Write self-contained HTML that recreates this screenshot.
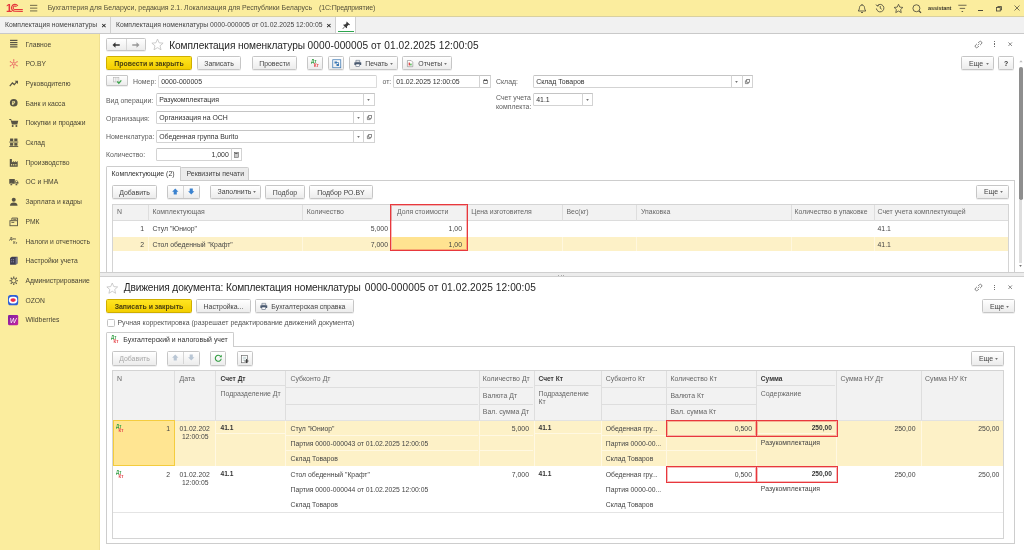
<!DOCTYPE html>
<html lang="ru"><head><meta charset="utf-8"><title>Комплектация номенклатуры</title>
<style>
html,body{margin:0;padding:0;background:#fff;}
body{width:1024px;height:550px;overflow:hidden;font-family:"Liberation Sans",sans-serif;font-size:6.93px;color:#3a3a3a;}
#root{filter:blur(0.3px);position:relative;width:1024px;height:550px;overflow:hidden;background:#fff;}
#root div{position:absolute;box-sizing:border-box;white-space:nowrap;}
.t{line-height:1.15;}
.btn{border:1px solid #c6c6c6;border-radius:1.5px;background:linear-gradient(#ffffff,#ececec);text-align:center;color:#444;box-shadow:0 0.5px 0.5px rgba(0,0,0,0.12);}
.btn.y{border-color:#cfae00;background:linear-gradient(#ffe521,#f3cf00);color:#4a4010;font-weight:bold;}
.btn.dis{color:#a8a8a8;}
.inp{border:1px solid #d3d3d3;border-top-color:#c4c4c4;border-radius:1.5px;background:#fff;padding:0 2.2px;color:#333;overflow:hidden;}
.ib{border:1px solid #d3d3d3;border-top-color:#c4c4c4;background:#fff;}
.hdr{background:#f2f2f2;}
.gl{background:#e2e2e2;}
svg{position:absolute;overflow:visible;}

</style></head><body>
<div id="root">
<div class="" style="left:0px;top:0px;width:1024px;height:16px;background:#fbed9e;"></div>
<svg style="left:0px;top:0px" width="24" height="16" viewBox="0 0 24 16"><text x="5.9" y="11.9" font-family="Liberation Sans, sans-serif" font-weight="bold" font-size="11" fill="#e5353c">1</text><g fill="none" stroke="#e5353c"><path d="M17.8 5.9 A3.45 3.45 0 1 0 14.9 11.3 H22.8" stroke-width="1.15"/><path d="M16.4 6.85 A1.75 1.75 0 1 0 14.9 9.55 H22.8" stroke-width="1.05"/></g></svg>
<svg style="left:30px;top:4px" width="8" height="8" viewBox="0 0 8 8"><g fill="#6a6446"><rect x="0" y="0.85" width="7.3" height="0.95"/><rect x="0" y="3.65" width="7.3" height="0.95"/><rect x="0" y="6.45" width="7.3" height="0.95"/></g></svg>
<div class="t" style="left:47.7px;top:4.1px;font-size:6.97px;color:#55503a;">Бухгалтерия для Беларуси, редакция 2.1. Локализация для Республики Беларусь</div>
<div class="t" style="left:319.1px;top:4.1px;font-size:7.0px;color:#55503a;letter-spacing:-0.17px;">(1С:Предприятие)</div>
<svg style="left:857px;top:2.5px" width="10" height="11" viewBox="0 0 20 22" fill="none" stroke="#4d4a3c" stroke-width="1.7"><path d="M2.5 16 C5 13.5 4.5 10 5.5 7 C6.5 3.2 13.5 3.2 14.5 7 C15.5 10 15 13.5 17.5 16 Z" stroke-linejoin="round"/><path d="M8 18.5 Q10 20.5 12 18.5"/><path d="M10 4 V2"/></svg>
<svg style="left:875px;top:3px" width="10" height="10" viewBox="0 0 20 20" fill="none" stroke="#4d4a3c" stroke-width="1.7"><path d="M4.5 5.5 A7.5 7.5 0 1 1 2.8 11"/><path d="M2 3 L4.5 6.2 L8 5" /><path d="M10.5 6 V10.5 L13.5 12.5"/></svg>
<svg style="left:892.5px;top:2.5px" width="11" height="11" viewBox="0 0 22 22" fill="none" stroke="#4d4a3c" stroke-width="1.6"><path d="M11 2.5 L13.6 8.2 L19.8 8.9 L15.2 13.1 L16.5 19.2 L11 16.1 L5.5 19.2 L6.8 13.1 L2.2 8.9 L8.4 8.2 Z"/></svg>
<svg style="left:911.5px;top:3.5px" width="10" height="10" viewBox="0 0 20 20" fill="none" stroke="#4d4a3c" stroke-width="1.7"><circle cx="8.8" cy="8.5" r="7"/><path d="M14 13.8 L18 17.6" stroke-width="2.4"/></svg>
<div class="t" style="left:928px;top:5.2px;font-size:5.6px;color:#3d3a2c;font-weight:bold;letter-spacing:-0.1px;">assistant</div>
<svg style="left:958px;top:4px" width="9" height="9" viewBox="0 0 9 9" fill="#4d4a3c"><rect x="0.3" y="0.8" width="8.2" height="0.8"/><rect x="1.7" y="3.9" width="5.4" height="0.8"/><rect x="3.6" y="7" width="1.5" height="0.9"/></svg>
<div class="" style="left:978px;top:10px;width:5px;height:1px;background:#4d4a3c;"></div>
<svg style="left:996px;top:6px" width="6" height="5.5" viewBox="0 0 12 11" fill="none" stroke="#4d4a3c" stroke-width="1.7"><rect x="1" y="3" width="7.5" height="7"/><path d="M3.5 3 V1 H11 V8 H8.5"/></svg>
<svg style="left:1013.5px;top:5px" width="6" height="6" viewBox="0 0 12 12" fill="none" stroke="#4d4a3c" stroke-width="1.5"><path d="M1 1 L11 11 M11 1 L1 11"/></svg>
<div class="" style="left:0px;top:16px;width:1024px;height:17.5px;background:#f1f1f1;border-top:1px solid #d9d0a0;border-bottom:1px solid #c9c9c9;"></div>
<div class="t" style="left:5px;top:21.1px;font-size:6.78px;color:#444;">Комплектация номенклатуры</div>
<div class="t" style="left:101.5px;top:20.8px;font-size:8px;color:#222;font-weight:bold;">×</div>
<div class="" style="left:109.5px;top:17px;width:1px;height:16px;background:#cfcfcf;"></div>
<div class="t" style="left:116px;top:21.1px;font-size:6.78px;color:#444;">Комплектация номенклатуры 0000-000005 от 01.02.2025 12:00:05</div>
<div class="t" style="left:326.5px;top:20.8px;font-size:8px;color:#222;font-weight:bold;">×</div>
<div class="" style="left:335px;top:17px;width:1px;height:16px;background:#cfcfcf;"></div>
<div class="" style="left:336px;top:17px;width:19px;height:16px;background:#fff;"></div>
<div class="" style="left:355px;top:17px;width:1px;height:16px;background:#cfcfcf;"></div>
<div class="" style="left:338px;top:31px;width:16px;height:1px;background:#2da44e;"></div>
<svg style="left:341.5px;top:20.5px" width="8.5" height="8.5" viewBox="0 0 18 18" fill="#3a3a3a" stroke="none"><path d="M10 1 L17 8 L15.5 9 L13.8 8.2 L10.5 11.5 L10.8 14.5 L9.5 15.5 L6.3 12.3 L2 17 L1 16 L5.7 11.7 L2.5 8.5 L3.5 7.2 L6.5 7.5 L9.8 4.2 L9 2.5 Z"/></svg>
<div class="" style="left:0px;top:34px;width:100px;height:516px;background:#fbed9e;border-right:1px solid #efe092;"></div>
<div class="t" style="left:25.5px;top:40.5px;font-size:6.75px;color:#4a4636;">Главное</div>
<div class="t" style="left:25.5px;top:60.2px;font-size:6.75px;color:#4a4636;">РО.BY</div>
<div class="t" style="left:25.5px;top:79.9px;font-size:6.75px;color:#4a4636;">Руководителю</div>
<div class="t" style="left:25.5px;top:99.6px;font-size:6.75px;color:#4a4636;">Банк и касса</div>
<div class="t" style="left:25.5px;top:119.3px;font-size:6.75px;color:#4a4636;">Покупки и продажи</div>
<div class="t" style="left:25.5px;top:139.0px;font-size:6.75px;color:#4a4636;">Склад</div>
<div class="t" style="left:25.5px;top:158.7px;font-size:6.75px;color:#4a4636;">Производство</div>
<div class="t" style="left:25.5px;top:178.4px;font-size:6.75px;color:#4a4636;">ОС и НМА</div>
<div class="t" style="left:25.5px;top:198.1px;font-size:6.75px;color:#4a4636;">Зарплата и кадры</div>
<div class="t" style="left:25.5px;top:217.8px;font-size:6.75px;color:#4a4636;">РМК</div>
<div class="t" style="left:25.5px;top:237.5px;font-size:6.75px;color:#4a4636;">Налоги и отчетность</div>
<div class="t" style="left:25.5px;top:257.2px;font-size:6.75px;color:#4a4636;">Настройки учета</div>
<div class="t" style="left:25.5px;top:276.9px;font-size:6.75px;color:#4a4636;">Администрирование</div>
<div class="t" style="left:25.5px;top:296.6px;font-size:6.75px;color:#4a4636;">OZON</div>
<div class="t" style="left:25.5px;top:316.3px;font-size:6.75px;color:#4a4636;">Wildberries</div>
<svg style="left:8.6px;top:39.3px" width="9.5" height="9.5" viewBox="0 0 18 18"><g fill="#575344"><rect x="2" y="1.5" width="14" height="2.3"/><rect x="2" y="5.6" width="14" height="2.3"/><rect x="2" y="9.7" width="14" height="2.3"/><rect x="2" y="13.8" width="14" height="2.3"/></g></svg>
<svg style="left:8.6px;top:59.0px" width="9.5" height="9.5" viewBox="0 0 18 18"><g stroke="#e5505c" stroke-width="1.3" fill="none"><path d="M9 1.5 V16.5 M2.5 5.2 L15.5 12.8 M2.5 12.8 L15.5 5.2"/></g><circle cx="9" cy="9" r="2.3" fill="#fbed9e" stroke="#e5505c" stroke-width="1.1"/><g fill="#e5505c"><circle cx="9" cy="1.5" r="1.1"/><circle cx="9" cy="16.5" r="1.1"/><circle cx="2.5" cy="5.2" r="1.1"/><circle cx="15.5" cy="12.8" r="1.1"/><circle cx="2.5" cy="12.8" r="1.1"/><circle cx="15.5" cy="5.2" r="1.1"/></g></svg>
<svg style="left:8.6px;top:78.7px" width="9.5" height="9.5" viewBox="0 0 18 18"><path d="M1.5 13.5 L6.5 7.5 L10 10.5 L14.5 5.5" fill="none" stroke="#575344" stroke-width="2.3"/><path d="M10.8 3.2 H17 V9.4 Z" fill="#575344"/></svg>
<svg style="left:8.6px;top:98.39999999999999px" width="9.5" height="9.5" viewBox="0 0 18 18"><circle cx="9" cy="9" r="7.3" fill="#575344"/><text x="9.2" y="12.8" font-family="Liberation Sans, sans-serif" font-weight="bold" font-size="10.5" text-anchor="middle" fill="#fbed9e">₽</text></svg>
<svg style="left:8.6px;top:118.1px" width="9.5" height="9.5" viewBox="0 0 18 18"><path d="M0.5 2 H4 L5 5 H17.5 L15.8 12.5 H5.5 L3 3.8 H0.5 Z" fill="#575344"/><circle cx="7" cy="15.3" r="1.9" fill="#575344"/><circle cx="14" cy="15.3" r="1.9" fill="#575344"/></svg>
<svg style="left:8.6px;top:137.8px" width="9.5" height="9.5" viewBox="0 0 18 18"><g fill="#575344"><rect x="2" y="1" width="6" height="5"/><rect x="10" y="1" width="6" height="5"/><rect x="0.5" y="6.8" width="17" height="1.7"/><rect x="2" y="9.6" width="6" height="5"/><rect x="10" y="9.6" width="6" height="5"/><rect x="0.5" y="15.4" width="17" height="1.7"/></g></svg>
<svg style="left:8.6px;top:157.5px" width="9.5" height="9.5" viewBox="0 0 18 18"><path d="M1.5 16.5 V2 H5.5 V8.5 L9.2 5.8 V8.5 L12.9 5.8 V8.5 L16.5 5.8 V16.5 Z" fill="#575344"/><g fill="#fbed9e"><rect x="4" y="11.5" width="2" height="2.6"/><rect x="8" y="11.5" width="2" height="2.6"/><rect x="12" y="11.5" width="2" height="2.6"/></g></svg>
<svg style="left:8.6px;top:177.20000000000002px" width="9.5" height="9.5" viewBox="0 0 18 18"><path d="M0.5 4 H11 V13 H0.5 Z M12 6.5 H15.5 L17.8 9.5 V13 H12 Z" fill="#575344"/><circle cx="4.3" cy="14" r="2.1" fill="#575344" stroke="#fbed9e" stroke-width="0.8"/><circle cx="14" cy="14" r="2.1" fill="#575344" stroke="#fbed9e" stroke-width="0.8"/><rect x="13.2" y="7.6" width="2.6" height="2.2" fill="#fbed9e"/></svg>
<svg style="left:8.6px;top:196.9px" width="9.5" height="9.5" viewBox="0 0 18 18"><circle cx="9" cy="5.2" r="3.8" fill="#575344"/><path d="M1.8 16.5 C1.8 11.5 5 10.2 9 10.2 C13 10.2 16.2 11.5 16.2 16.5 Z" fill="#575344"/></svg>
<svg style="left:8.6px;top:216.6px" width="9.5" height="9.5" viewBox="0 0 18 18"><g fill="none" stroke="#575344" stroke-width="1.7"><rect x="1.8" y="7" width="14.4" height="9.5"/><path d="M5.5 7 V2 H16.2 V7"/><path d="M4.5 10.2 H10"/></g><rect x="8" y="3.5" width="6" height="1.6" fill="#575344"/></svg>
<svg style="left:8.6px;top:236.3px" width="9.5" height="9.5" viewBox="0 0 18 18"><text x="1" y="7" font-family="Liberation Sans, sans-serif" font-weight="bold" font-style="italic" font-size="7.5" fill="#575344">Дт</text><text x="8" y="16" font-family="Liberation Sans, sans-serif" font-weight="bold" font-size="7" fill="#575344">Кт</text></svg>
<svg style="left:8.6px;top:256.0px" width="9.5" height="9.5" viewBox="0 0 18 18"><path d="M2 4 L5.5 1.5 H16 V14 L12.5 16.8 H2 Z" fill="#3e3d52"/><path d="M12.5 4 L16 1.5 V14 L12.5 16.8 Z" fill="#77768a"/><g fill="#8a89a0"><rect x="4" y="6" width="2" height="2"/><rect x="7.5" y="6" width="2" height="2"/><rect x="4" y="10" width="2" height="2"/><rect x="7.5" y="10" width="2" height="2"/></g></svg>
<svg style="left:8.6px;top:275.7px" width="9.5" height="9.5" viewBox="0 0 18 18"><g fill="none" stroke="#575344" stroke-width="1.6"><circle cx="9" cy="9" r="4.2"/><path d="M9 1 V4 M9 14 V17 M1 9 H4 M14 9 H17 M3.3 3.3 L5.5 5.5 M12.5 12.5 L14.7 14.7 M14.7 3.3 L12.5 5.5 M5.5 12.5 L3.3 14.7" stroke-width="2.2"/></g></svg>
<svg style="left:8.2px;top:295.09999999999997px" width="10.2" height="10.2" viewBox="0 0 18 18"><rect x="0" y="0" width="18" height="18" rx="4.5" fill="#2f5fd6"/><rect x="1.6" y="3.2" width="14.8" height="11.6" rx="5.5" fill="#fff"/><ellipse cx="9" cy="9" rx="4.8" ry="3.2" fill="#ee2c4a"/></svg>
<svg style="left:8.2px;top:314.8px" width="10.2" height="10.2" viewBox="0 0 18 18"><defs><linearGradient id="wb" x1="0" y1="0" x2="1" y2="1"><stop offset="0" stop-color="#7b1fa2"/><stop offset="1" stop-color="#c7249f"/></linearGradient></defs><rect x="0" y="0" width="18" height="18" rx="2" fill="url(#wb)"/><text x="9" y="13.6" font-family="Liberation Sans, sans-serif" font-style="italic" font-size="12.5" text-anchor="middle" fill="#fff">W</text></svg>
<div class="btn" style="left:106px;top:38px;width:40px;height:13px;line-height:12px;"></div>
<div class="" style="left:126px;top:39px;width:1px;height:11px;background:#d5d5d5;"></div>
<svg style="left:112px;top:41.8px" width="8" height="6" viewBox="0 0 16 12"><path d="M1 6 L7 0.5 V4.3 H15.5 V7.7 H7 V11.5 Z" fill="#333"/></svg>
<svg style="left:132px;top:41.8px" width="8" height="6" viewBox="0 0 16 12"><path d="M15 6 L9 0.5 V4.3 H0.5 V7.7 H9 V11.5 Z" fill="#999"/></svg>
<svg style="left:151px;top:38px" width="13" height="13" viewBox="0 0 22 22" fill="none" stroke="#bdbdbd" stroke-width="1.3"><path d="M11 1.8 L13.7 8.1 L20.5 8.7 L15.3 13.2 L16.9 19.9 L11 16.3 L5.1 19.9 L6.7 13.2 L1.5 8.7 L8.3 8.1 Z"/></svg>
<div class="t" style="left:169.2px;top:39.7px;font-size:10.13px;color:#262626;"><span style="letter-spacing:-0.086px">Комплектация номенклатуры </span><span style="letter-spacing:0.085px">0000-000005 от 01.02.2025 12:00:05</span></div>
<svg style="left:974px;top:39.5px" width="9" height="9" viewBox="0 0 18 18" fill="none" stroke="#7a7a7a" stroke-width="1.7"><g transform="rotate(-42 9 9)"><path d="M7.5 12 H4 A3 3 0 0 1 4 6 H7.5"/><path d="M10.5 6 H14 A3 3 0 0 1 14 12 H10.5"/><path d="M6.5 9 H11.5" stroke-width="1.4"/></g></svg>
<div class="" style="left:994px;top:41.0px;width:1.3px;height:1.3px;background:#6e6e6e;"></div>
<div class="" style="left:994px;top:43.3px;width:1.3px;height:1.3px;background:#6e6e6e;"></div>
<div class="" style="left:994px;top:45.6px;width:1.3px;height:1.3px;background:#6e6e6e;"></div>
<svg style="left:1007.9px;top:41.9px" width="4.4" height="4.4" viewBox="0 0 10 10" fill="none" stroke="#777" stroke-width="2"><path d="M1 1 L9 9 M9 1 L1 9"/></svg>
<div class="btn y" style="left:106px;top:56px;width:86px;height:14px;line-height:13px;">Провести и закрыть</div>
<div class="btn" style="left:197px;top:56px;width:44px;height:14px;line-height:13px;">Записать</div>
<div class="btn" style="left:252px;top:56px;width:45px;height:14px;line-height:13px;">Провести</div>
<div class="btn" style="left:307px;top:56px;width:16px;height:14px;line-height:13px;"></div>
<svg style="left:311px;top:58.8px" width="8.93" height="8.22" viewBox="0 0 8.93 8.22"><text x="0" y="3.67" font-family="Liberation Sans, sans-serif" font-weight="bold" font-size="4.7" fill="#35a046">Дт</text><text x="2.73" y="7.72" font-family="Liberation Sans, sans-serif" font-weight="bold" font-size="4.7" fill="#e5484d">Кт</text></svg>
<div class="btn" style="left:328px;top:56px;width:16px;height:14px;line-height:13px;"></div>
<svg style="left:331.5px;top:58.5px" width="9.5" height="9.5" viewBox="0 0 19 19" fill="none" stroke="#3c78b4" stroke-width="1.5"><rect x="1.5" y="1.5" width="16" height="16"/><rect x="5" y="5" width="5" height="4" fill="#3c78b4" stroke="none"/><rect x="9" y="10" width="5" height="4" fill="#3c78b4" stroke="none"/><path d="M10 7 H13 V10"/></svg>
<div class="btn" style="left:349px;top:56px;width:49px;height:14px;line-height:13px;"></div>
<svg style="left:353.7px;top:59.8px" width="7.6" height="6.8" viewBox="0 0 18 16"><path d="M4.5 0.8 H13.5 V5 H4.5 Z" fill="#fff" stroke="#4a5a70" stroke-width="1.3"/><rect x="0.8" y="5" width="16.4" height="7" rx="1.5" fill="#4a5a70"/><rect x="4.5" y="9.5" width="9" height="5.5" fill="#fff" stroke="#4a5a70" stroke-width="1.3"/></svg>
<div class="t" style="left:365.3px;top:59.9px;font-size:6.93px;color:#444;">Печать</div>
<svg style="left:390px;top:62.5px" width="3" height="1.9" viewBox="0 0 8 5"><path d="M0.5 0.5 H7.5 L4 4.5 Z" fill="#444"/></svg>
<div class="btn" style="left:402px;top:56px;width:50px;height:14px;line-height:13px;"></div>
<svg style="left:407px;top:59.5px" width="6.2" height="7.2" viewBox="0 0 15 17"><path d="M1 1 H10 L14 5 V16 H1 Z" fill="#fff" stroke="#777" stroke-width="1.3"/><rect x="4" y="6" width="3" height="7" fill="#d33"/><rect x="8" y="8.5" width="3" height="4.5" fill="#3a3"/></svg>
<div class="t" style="left:418.3px;top:59.9px;font-size:6.93px;color:#444;">Отчеты</div>
<svg style="left:444px;top:62.5px" width="3" height="1.9" viewBox="0 0 8 5"><path d="M0.5 0.5 H7.5 L4 4.5 Z" fill="#444"/></svg>
<div class="btn" style="left:961px;top:56px;width:33px;height:14px;line-height:13px;"></div>
<div class="t" style="left:969px;top:59.7px;font-size:6.93px;color:#444;">Еще</div>
<svg style="left:985.5px;top:62.5px" width="3" height="1.9" viewBox="0 0 8 5"><path d="M0.5 0.5 H7.5 L4 4.5 Z" fill="#444"/></svg>
<div class="btn" style="left:998px;top:56px;width:16px;height:14px;line-height:13px;font-weight:bold;color:#333;">?</div>
<div class="" style="left:1019px;top:67px;width:3.5px;height:133px;background:#8e8e8e;border-radius:1.8px;"></div>
<div class="" style="left:1019px;top:200px;width:3px;height:63px;background:#dedede;"></div>
<svg style="left:1018.7px;top:59.5px" width="4" height="2.4" viewBox="0 0 8 5"><path d="M0.5 4.5 H7.5 L4 0.5 Z" fill="#bbb"/></svg>
<svg style="left:1018.7px;top:265.2px" width="3" height="1.9" viewBox="0 0 8 5"><path d="M0.5 0.5 H7.5 L4 4.5 Z" fill="#444"/></svg>
<div class="btn" style="left:106px;top:75px;width:22px;height:11px;line-height:10px;border-radius:1px;"></div>
<svg style="left:113px;top:77.3px" width="9" height="7.2" viewBox="0 0 20 16"><rect x="1" y="1" width="12" height="10" fill="#fff" stroke="#b0b0b0" stroke-width="1.3"/><path d="M5 1 V11 M9 1 V11" stroke="#b0b0b0" stroke-width="1.2"/><path d="M9.5 10 L13 13.8 L18.5 7.5" fill="none" stroke="#3aa54a" stroke-width="2.8"/></svg>
<div class="t" style="left:133px;top:78.1px;font-size:6.93px;color:#606060;">Номер:</div>
<div class="inp" style="left:158px;top:75px;width:219px;height:13px;line-height:12px;text-align:left;border-color:#dcdcdc;border-top-color:#d0d0d0;">0000-000005</div>
<div class="t" style="left:382.5px;top:78.1px;font-size:6.93px;color:#606060;">от:</div>
<div class="inp" style="left:393px;top:75px;width:87px;height:13px;line-height:12px;text-align:left;">01.02.2025 12:00:05</div>
<div class="ib" style="left:479px;top:75px;width:12px;height:13px;"></div>
<svg style="left:482.7px;top:79px" width="5" height="5" viewBox="0 0 12 12"><rect x="0.8" y="2" width="10.4" height="9.2" rx="1" fill="#555"/><rect x="2.2" y="4.8" width="7.6" height="5" fill="#fff"/><rect x="2.6" y="0.3" width="1.6" height="2.6" fill="#555"/><rect x="7.8" y="0.3" width="1.6" height="2.6" fill="#555"/></svg>
<div class="t" style="left:496px;top:78.1px;font-size:6.93px;color:#606060;">Склад:</div>
<div class="inp" style="left:533px;top:75px;width:199px;height:13px;line-height:12px;text-align:left;">Склад Товаров</div>
<div class="ib" style="left:731px;top:75px;width:12px;height:13px;"></div>
<svg style="left:735.3px;top:80.5px" width="3" height="1.9" viewBox="0 0 8 5"><path d="M0.5 0.5 H7.5 L4 4.5 Z" fill="#444"/></svg>
<div class="ib" style="left:742px;top:75px;width:11px;height:13px;"></div>
<svg style="left:745px;top:79px" width="5" height="5" viewBox="0 0 10 10" fill="none" stroke="#555" stroke-width="1.3"><rect x="3.5" y="0.8" width="5.7" height="5.7"/><path d="M3.5 3.5 H0.8 V9.2 H6.5 V6.5"/></svg>
<div class="t" style="left:106px;top:96.5px;font-size:6.93px;color:#606060;">Вид операции:</div>
<div class="inp" style="left:156px;top:93px;width:208px;height:13px;line-height:12px;text-align:left;">Разукомплектация</div>
<div class="ib" style="left:363px;top:93px;width:12px;height:13px;"></div>
<svg style="left:367.3px;top:98.5px" width="3" height="1.9" viewBox="0 0 8 5"><path d="M0.5 0.5 H7.5 L4 4.5 Z" fill="#444"/></svg>
<div class="t" style="left:496px;top:94.3px;font-size:6.93px;color:#606060;">Счет учета</div>
<div class="t" style="left:496px;top:102.8px;font-size:6.93px;color:#606060;">комплекта:</div>
<div class="inp" style="left:533px;top:93px;width:50px;height:13px;line-height:12px;text-align:left;">41.1</div>
<div class="ib" style="left:582px;top:93px;width:11px;height:13px;"></div>
<svg style="left:586px;top:98.5px" width="3" height="1.9" viewBox="0 0 8 5"><path d="M0.5 0.5 H7.5 L4 4.5 Z" fill="#444"/></svg>
<div class="t" style="left:106px;top:114.5px;font-size:6.93px;color:#606060;">Организация:</div>
<div class="inp" style="left:156px;top:111px;width:198px;height:13px;line-height:12px;text-align:left;">Организация на ОСН</div>
<div class="ib" style="left:353px;top:111px;width:11px;height:13px;"></div>
<svg style="left:357px;top:116.5px" width="3" height="1.9" viewBox="0 0 8 5"><path d="M0.5 0.5 H7.5 L4 4.5 Z" fill="#444"/></svg>
<div class="ib" style="left:363px;top:111px;width:12px;height:13px;"></div>
<svg style="left:366.5px;top:115px" width="5" height="5" viewBox="0 0 10 10" fill="none" stroke="#555" stroke-width="1.3"><rect x="3.5" y="0.8" width="5.7" height="5.7"/><path d="M3.5 3.5 H0.8 V9.2 H6.5 V6.5"/></svg>
<div class="t" style="left:106px;top:132.5px;font-size:6.93px;color:#606060;">Номенклатура:</div>
<div class="inp" style="left:156px;top:130px;width:198px;height:13px;line-height:12px;text-align:left;">Обеденная группа Burito</div>
<div class="ib" style="left:353px;top:130px;width:11px;height:13px;"></div>
<svg style="left:357px;top:135.5px" width="3" height="1.9" viewBox="0 0 8 5"><path d="M0.5 0.5 H7.5 L4 4.5 Z" fill="#444"/></svg>
<div class="ib" style="left:363px;top:130px;width:12px;height:13px;"></div>
<svg style="left:366.5px;top:134px" width="5" height="5" viewBox="0 0 10 10" fill="none" stroke="#555" stroke-width="1.3"><rect x="3.5" y="0.8" width="5.7" height="5.7"/><path d="M3.5 3.5 H0.8 V9.2 H6.5 V6.5"/></svg>
<div class="t" style="left:106px;top:151.0px;font-size:6.93px;color:#606060;">Количество:</div>
<div class="inp" style="left:156px;top:148px;width:76px;height:13px;line-height:12px;text-align:right;">1,000</div>
<div class="ib" style="left:231px;top:148px;width:11px;height:13px;"></div>
<svg style="left:234.2px;top:152px" width="4.8" height="5.6" viewBox="0 0 11 13"><rect x="0.7" y="0.7" width="9.6" height="11.6" fill="#fff" stroke="#555" stroke-width="1.4"/><rect x="2.5" y="2.5" width="6" height="2.2" fill="#555"/><g fill="#555"><rect x="2.5" y="6" width="1.6" height="1.6"/><rect x="4.7" y="6" width="1.6" height="1.6"/><rect x="6.9" y="6" width="1.6" height="1.6"/><rect x="2.5" y="8.8" width="1.6" height="1.6"/><rect x="4.7" y="8.8" width="1.6" height="1.6"/><rect x="6.9" y="8.8" width="1.6" height="1.6"/></g></svg>
<div class="" style="left:106px;top:179.5px;width:908.5px;height:93px;border:1px solid #cdcdcd;border-bottom:none;background:#fff;"></div>
<div class="" style="left:180px;top:167px;width:69px;height:13.5px;border:1px solid #cdcdcd;background:#ececec;border-radius:1.5px 1.5px 0 0;"></div>
<div class="t" style="left:186.5px;top:170.3px;font-size:6.93px;color:#444;">Реквизиты печати</div>
<div class="" style="left:106px;top:166px;width:74.5px;height:14.5px;border:1px solid #cdcdcd;border-bottom:none;background:#fff;border-radius:1.5px 1.5px 0 0;"></div>
<div class="t" style="left:111.5px;top:169.8px;font-size:6.93px;color:#333;">Комплектующие (2)</div>
<div class="btn" style="left:112px;top:185px;width:45px;height:14px;line-height:13px;">Добавить</div>
<div class="btn" style="left:167px;top:185px;width:33px;height:14px;line-height:13px;"></div>
<div class="" style="left:183px;top:186px;width:1px;height:12px;background:#d5d5d5;"></div>
<svg style="left:172px;top:188.2px" width="6.5" height="7" viewBox="0 0 13 14"><path d="M6.5 0.8 L12.8 7.3 H9.6 V13.2 H3.4 V7.3 H0.2 Z" fill="#3a82cf"/></svg>
<svg style="left:188.2px;top:188.2px" width="6.5" height="7" viewBox="0 0 13 14"><path d="M6.5 13.2 L12.8 6.7 H9.6 V0.8 H3.4 V6.7 H0.2 Z" fill="#3a82cf"/></svg>
<div class="btn" style="left:210px;top:185px;width:51px;height:14px;line-height:13px;"></div>
<div class="t" style="left:217.5px;top:188.4px;font-size:6.93px;color:#444;">Заполнить</div>
<svg style="left:253px;top:191px" width="3" height="1.9" viewBox="0 0 8 5"><path d="M0.5 0.5 H7.5 L4 4.5 Z" fill="#444"/></svg>
<div class="btn" style="left:265px;top:185px;width:40px;height:14px;line-height:13px;">Подбор</div>
<div class="btn" style="left:309px;top:185px;width:64px;height:14px;line-height:13px;">Подбор РО.BY</div>
<div class="btn" style="left:976px;top:185px;width:33px;height:14px;line-height:13px;"></div>
<div class="t" style="left:984px;top:188.4px;font-size:6.93px;color:#444;">Еще</div>
<svg style="left:1000.2px;top:191px" width="3" height="1.9" viewBox="0 0 8 5"><path d="M0.5 0.5 H7.5 L4 4.5 Z" fill="#444"/></svg>
<div class="" style="left:112px;top:203.5px;width:897px;height:69px;border:1px solid #d4d4d4;border-bottom:none;background:#fff;"></div>
<div class="" style="left:113px;top:204.5px;width:895px;height:16px;background:#f2f2f2;border-bottom:1px solid #dcdcdc;"></div>
<div class="" style="left:113px;top:236.5px;width:895px;height:14.5px;background:#fdf1c7;"></div>
<div class="" style="left:148.2px;top:204.5px;width:1px;height:16px;background:#dedede;"></div>
<div class="" style="left:148.2px;top:236.5px;width:1px;height:14.5px;background:#fff7de;"></div>
<div class="" style="left:302px;top:204.5px;width:1px;height:16px;background:#dedede;"></div>
<div class="" style="left:302px;top:236.5px;width:1px;height:14.5px;background:#fff7de;"></div>
<div class="" style="left:391px;top:204.5px;width:1px;height:16px;background:#dedede;"></div>
<div class="" style="left:391px;top:236.5px;width:1px;height:14.5px;background:#fff7de;"></div>
<div class="" style="left:467px;top:204.5px;width:1px;height:16px;background:#dedede;"></div>
<div class="" style="left:467px;top:236.5px;width:1px;height:14.5px;background:#fff7de;"></div>
<div class="" style="left:562px;top:204.5px;width:1px;height:16px;background:#dedede;"></div>
<div class="" style="left:562px;top:236.5px;width:1px;height:14.5px;background:#fff7de;"></div>
<div class="" style="left:636px;top:204.5px;width:1px;height:16px;background:#dedede;"></div>
<div class="" style="left:636px;top:236.5px;width:1px;height:14.5px;background:#fff7de;"></div>
<div class="" style="left:790.5px;top:204.5px;width:1px;height:16px;background:#dedede;"></div>
<div class="" style="left:790.5px;top:236.5px;width:1px;height:14.5px;background:#fff7de;"></div>
<div class="" style="left:873.5px;top:204.5px;width:1px;height:16px;background:#dedede;"></div>
<div class="" style="left:873.5px;top:236.5px;width:1px;height:14.5px;background:#fff7de;"></div>
<div class="" style="left:391.5px;top:236.5px;width:75.5px;height:14.5px;background:#ffe391;"></div>
<div class="t" style="left:117px;top:207.9px;font-size:6.9px;color:#666;">N</div>
<div class="t" style="left:152.5px;top:207.9px;font-size:6.9px;color:#666;">Комплектующая</div>
<div class="t" style="left:306.8px;top:207.9px;font-size:6.9px;color:#666;">Количество</div>
<div class="t" style="left:397px;top:207.9px;font-size:6.9px;color:#666;">Доля стоимости</div>
<div class="t" style="left:471.3px;top:207.9px;font-size:6.9px;color:#666;">Цена изготовителя</div>
<div class="t" style="left:566.5px;top:207.9px;font-size:6.9px;color:#666;">Вес(кг)</div>
<div class="t" style="left:641px;top:207.9px;font-size:6.9px;color:#666;">Упаковка</div>
<div class="t" style="left:794.5px;top:207.9px;font-size:6.9px;color:#666;">Количество в упаковке</div>
<div class="t" style="left:877.5px;top:207.9px;font-size:6.9px;color:#666;">Счет учета комплектующей</div>
<div class="t" style="right:880px;top:224.8px;font-size:6.88px;color:#454545;">1</div>
<div class="t" style="left:152.5px;top:224.8px;font-size:6.88px;color:#454545;">Стул &quot;Юниор&quot;</div>
<div class="t" style="right:636px;top:224.8px;font-size:6.88px;color:#454545;">5,000</div>
<div class="t" style="right:562px;top:224.8px;font-size:6.88px;color:#454545;">1,00</div>
<div class="t" style="left:877.5px;top:224.8px;font-size:6.88px;color:#454545;">41.1</div>
<div class="t" style="right:880px;top:240.8px;font-size:6.88px;color:#454545;">2</div>
<div class="t" style="left:152.5px;top:240.8px;font-size:6.88px;color:#454545;">Стол обеденный &quot;Крафт&quot;</div>
<div class="t" style="right:636px;top:240.8px;font-size:6.88px;color:#454545;">7,000</div>
<div class="t" style="right:562px;top:240.8px;font-size:6.88px;color:#454545;">1,00</div>
<div class="t" style="left:877.5px;top:240.8px;font-size:6.88px;color:#454545;">41.1</div>
<div class="" style="left:390px;top:204px;width:78px;height:47px;border:1px solid #e8383d;box-shadow:inset 0 0 0 1px rgba(232,56,61,.35);"></div>
<div class="" style="left:100px;top:272px;width:924px;height:5px;background:#ececec;border-top:1px solid #cfcfcf;border-bottom:1px solid #cfcfcf;"></div>
<div class="" style="left:558.0px;top:274.5px;width:1.2px;height:1px;background:#aaa;"></div>
<div class="" style="left:560.5px;top:274.5px;width:1.2px;height:1px;background:#aaa;"></div>
<div class="" style="left:563.0px;top:274.5px;width:1.2px;height:1px;background:#aaa;"></div>
<svg style="left:106px;top:281.5px" width="12.5" height="12.5" viewBox="0 0 22 22" fill="none" stroke="#bdbdbd" stroke-width="1.3"><path d="M11 1.8 L13.7 8.1 L20.5 8.7 L15.3 13.2 L16.9 19.9 L11 16.3 L5.1 19.9 L6.7 13.2 L1.5 8.7 L8.3 8.1 Z"/></svg>
<div class="t" style="left:123.7px;top:282.4px;font-size:10.13px;color:#262626;"><span style="letter-spacing:-0.129px">Движения документа: Комплектация номенклатуры </span><span style="letter-spacing:0.085px;margin-left:1.5px">0000-000005 от 01.02.2025 12:00:05</span></div>
<svg style="left:974px;top:283px" width="9" height="9" viewBox="0 0 18 18" fill="none" stroke="#7a7a7a" stroke-width="1.7"><g transform="rotate(-42 9 9)"><path d="M7.5 12 H4 A3 3 0 0 1 4 6 H7.5"/><path d="M10.5 6 H14 A3 3 0 0 1 14 12 H10.5"/><path d="M6.5 9 H11.5" stroke-width="1.4"/></g></svg>
<div class="" style="left:994px;top:284.5px;width:1.3px;height:1.3px;background:#6e6e6e;"></div>
<div class="" style="left:994px;top:286.8px;width:1.3px;height:1.3px;background:#6e6e6e;"></div>
<div class="" style="left:994px;top:289.1px;width:1.3px;height:1.3px;background:#6e6e6e;"></div>
<svg style="left:1007.9px;top:285.4px" width="4.4" height="4.4" viewBox="0 0 10 10" fill="none" stroke="#777" stroke-width="2"><path d="M1 1 L9 9 M9 1 L1 9"/></svg>
<div class="btn y" style="left:106px;top:299px;width:86px;height:14px;line-height:13px;">Записать и закрыть</div>
<div class="btn" style="left:196px;top:299px;width:55px;height:14px;line-height:13px;">Настройка...</div>
<div class="btn" style="left:255px;top:299px;width:99px;height:14px;line-height:13px;"></div>
<svg style="left:260px;top:302.8px" width="7.6" height="6.8" viewBox="0 0 18 16"><path d="M4.5 0.8 H13.5 V5 H4.5 Z" fill="#fff" stroke="#4a5a70" stroke-width="1.3"/><rect x="0.8" y="5" width="16.4" height="7" rx="1.5" fill="#4a5a70"/><rect x="4.5" y="9.5" width="9" height="5.5" fill="#fff" stroke="#4a5a70" stroke-width="1.3"/></svg>
<div class="t" style="left:271.3px;top:302.7px;font-size:6.93px;color:#444;">Бухгалтерская справка</div>
<div class="btn" style="left:982px;top:299px;width:33px;height:14px;line-height:13px;"></div>
<div class="t" style="left:990px;top:302.7px;font-size:6.93px;color:#444;">Еще</div>
<svg style="left:1006px;top:305.5px" width="3" height="1.9" viewBox="0 0 8 5"><path d="M0.5 0.5 H7.5 L4 4.5 Z" fill="#444"/></svg>
<div class="" style="left:107px;top:319px;width:8px;height:8px;border:1px solid #c2c2c2;background:#fff;border-radius:1.5px;"></div>
<div class="t" style="left:117.5px;top:319.2px;font-size:6.93px;color:#555;">Ручная корректировка (разрешает редактирование движений документа)</div>
<div class="" style="left:106px;top:346px;width:908.5px;height:198px;border:1px solid #cdcdcd;background:#fff;"></div>
<div class="" style="left:106px;top:332px;width:128px;height:15px;border:1px solid #cdcdcd;border-bottom:none;background:#fff;border-radius:1.5px 1.5px 0 0;"></div>
<svg style="left:110.9px;top:335.2px" width="8.55" height="7.88" viewBox="0 0 8.55 7.88"><text x="0" y="3.51" font-family="Liberation Sans, sans-serif" font-weight="bold" font-size="4.5" fill="#35a046">Дт</text><text x="2.61" y="7.56" font-family="Liberation Sans, sans-serif" font-weight="bold" font-size="4.5" fill="#e5484d">Кт</text></svg>
<div class="t" style="left:123.3px;top:336.3px;font-size:6.93px;color:#333;">Бухгалтерский и налоговый учет</div>
<div class="btn dis" style="left:112px;top:351px;width:45px;height:14.6px;line-height:13.6px;">Добавить</div>
<div class="btn" style="left:167px;top:351px;width:33px;height:14.6px;line-height:13.6px;"></div>
<div class="" style="left:183px;top:352px;width:1px;height:12px;background:#d5d5d5;"></div>
<svg style="left:172px;top:354.2px" width="6.5" height="7" viewBox="0 0 13 14"><path d="M6.5 0.8 L12.8 7.3 H9.6 V13.2 H3.4 V7.3 H0.2 Z" fill="#b9c6d4"/></svg>
<svg style="left:188.2px;top:354.2px" width="6.5" height="7" viewBox="0 0 13 14"><path d="M6.5 13.2 L12.8 6.7 H9.6 V0.8 H3.4 V6.7 H0.2 Z" fill="#b9c6d4"/></svg>
<div class="btn" style="left:210px;top:351px;width:16px;height:14.6px;line-height:13.6px;"></div>
<svg style="left:214px;top:354px" width="8.5" height="8.5" viewBox="0 0 17 17" fill="none" stroke="#2e9b3e" stroke-width="2.2"><path d="M13.5 5 A6 6 0 1 0 14.5 9.5"/><path d="M15.5 1.5 V6.5 H10.5 Z" fill="#2e9b3e" stroke="none"/></svg>
<div class="btn" style="left:237px;top:351px;width:16px;height:14.6px;line-height:13.6px;"></div>
<svg style="left:241px;top:354.5px" width="8" height="8.5" viewBox="0 0 16 17"><rect x="1" y="1" width="12" height="14.5" fill="#fff" stroke="#666" stroke-width="1.3"/><path d="M3.5 4.5 H10.5 M3.5 7.5 H10.5 M3.5 10.5 H8" stroke="#8aa" stroke-width="1"/><path d="M11 8 V16 M7 12 H15" stroke="#333" stroke-width="1.8"/></svg>
<div class="btn" style="left:971px;top:351px;width:33px;height:14.6px;line-height:13.6px;"></div>
<div class="t" style="left:979px;top:355.2px;font-size:6.93px;color:#444;">Еще</div>
<svg style="left:995px;top:358px" width="3" height="1.9" viewBox="0 0 8 5"><path d="M0.5 0.5 H7.5 L4 4.5 Z" fill="#444"/></svg>
<div class="" style="left:112px;top:370px;width:892px;height:169px;border:1px solid #d4d4d4;background:#fff;"></div>
<div class="" style="left:113px;top:371px;width:890px;height:49px;background:#f2f2f2;"></div>
<div class="" style="left:113px;top:420px;width:890px;height:46px;background:#fdf1c7;"></div>
<div class="" style="left:174px;top:371px;width:1px;height:49px;background:#dedede;"></div>
<div class="" style="left:174px;top:420px;width:1px;height:46px;background:#fff8e2;"></div>
<div class="" style="left:215px;top:371px;width:1px;height:49px;background:#dedede;"></div>
<div class="" style="left:215px;top:420px;width:1px;height:46px;background:#fff8e2;"></div>
<div class="" style="left:285px;top:371px;width:1px;height:49px;background:#dedede;"></div>
<div class="" style="left:285px;top:420px;width:1px;height:46px;background:#fff8e2;"></div>
<div class="" style="left:478.5px;top:371px;width:1px;height:49px;background:#dedede;"></div>
<div class="" style="left:478.5px;top:420px;width:1px;height:46px;background:#fff8e2;"></div>
<div class="" style="left:533.5px;top:371px;width:1px;height:49px;background:#dedede;"></div>
<div class="" style="left:533.5px;top:420px;width:1px;height:46px;background:#fff8e2;"></div>
<div class="" style="left:601.3px;top:371px;width:1px;height:49px;background:#dedede;"></div>
<div class="" style="left:601.3px;top:420px;width:1px;height:46px;background:#fff8e2;"></div>
<div class="" style="left:666.3px;top:371px;width:1px;height:49px;background:#dedede;"></div>
<div class="" style="left:666.3px;top:420px;width:1px;height:46px;background:#fff8e2;"></div>
<div class="" style="left:756.3px;top:371px;width:1px;height:49px;background:#dedede;"></div>
<div class="" style="left:756.3px;top:420px;width:1px;height:46px;background:#fff8e2;"></div>
<div class="" style="left:835.5px;top:371px;width:1px;height:49px;background:#dedede;"></div>
<div class="" style="left:835.5px;top:420px;width:1px;height:46px;background:#fff8e2;"></div>
<div class="" style="left:920.5px;top:371px;width:1px;height:49px;background:#dedede;"></div>
<div class="" style="left:920.5px;top:420px;width:1px;height:46px;background:#fff8e2;"></div>
<div class="" style="left:113px;top:420px;width:890px;height:1px;background:#e2e2e2;"></div>
<div class="" style="left:216px;top:385px;width:69px;height:1px;background:#dedede;"></div>
<div class="" style="left:534px;top:385px;width:67px;height:1px;background:#dedede;"></div>
<div class="" style="left:757px;top:385px;width:78px;height:1px;background:#dedede;"></div>
<div class="" style="left:286px;top:387px;width:192px;height:1px;background:#dedede;"></div>
<div class="" style="left:286px;top:403.5px;width:192px;height:1px;background:#dedede;"></div>
<div class="" style="left:479px;top:387px;width:54px;height:1px;background:#dedede;"></div>
<div class="" style="left:479px;top:403.5px;width:54px;height:1px;background:#dedede;"></div>
<div class="" style="left:602px;top:387px;width:64px;height:1px;background:#dedede;"></div>
<div class="" style="left:602px;top:403.5px;width:64px;height:1px;background:#dedede;"></div>
<div class="" style="left:667px;top:387px;width:89px;height:1px;background:#dedede;"></div>
<div class="" style="left:667px;top:403.5px;width:89px;height:1px;background:#dedede;"></div>
<div class="" style="left:286px;top:435.2px;width:192px;height:1px;background:#fff8e2;"></div>
<div class="" style="left:286px;top:450.4px;width:192px;height:1px;background:#fff8e2;"></div>
<div class="" style="left:479px;top:435.2px;width:54px;height:1px;background:#fff8e2;"></div>
<div class="" style="left:479px;top:450.4px;width:54px;height:1px;background:#fff8e2;"></div>
<div class="" style="left:602px;top:435.2px;width:64px;height:1px;background:#fff8e2;"></div>
<div class="" style="left:602px;top:450.4px;width:64px;height:1px;background:#fff8e2;"></div>
<div class="" style="left:667px;top:435.2px;width:89px;height:1px;background:#fff8e2;"></div>
<div class="" style="left:667px;top:450.4px;width:89px;height:1px;background:#fff8e2;"></div>
<div class="" style="left:216px;top:433.3px;width:69px;height:1px;background:#fff8e2;"></div>
<div class="" style="left:534px;top:433.3px;width:67px;height:1px;background:#fff8e2;"></div>
<div class="" style="left:757px;top:433.3px;width:78px;height:1px;background:#fff8e2;"></div>
<div class="" style="left:286px;top:481.2px;width:192px;height:1px;background:#ffffff;"></div>
<div class="" style="left:286px;top:496.4px;width:192px;height:1px;background:#ffffff;"></div>
<div class="" style="left:479px;top:481.2px;width:54px;height:1px;background:#ffffff;"></div>
<div class="" style="left:479px;top:496.4px;width:54px;height:1px;background:#ffffff;"></div>
<div class="" style="left:602px;top:481.2px;width:64px;height:1px;background:#ffffff;"></div>
<div class="" style="left:602px;top:496.4px;width:64px;height:1px;background:#ffffff;"></div>
<div class="" style="left:667px;top:481.2px;width:89px;height:1px;background:#ffffff;"></div>
<div class="" style="left:667px;top:496.4px;width:89px;height:1px;background:#ffffff;"></div>
<div class="" style="left:216px;top:479.3px;width:69px;height:1px;background:#ffffff;"></div>
<div class="" style="left:534px;top:479.3px;width:67px;height:1px;background:#ffffff;"></div>
<div class="" style="left:757px;top:479.3px;width:78px;height:1px;background:#ffffff;"></div>
<div class="" style="left:113px;top:512.4px;width:890px;height:1px;background:#e4e4e4;"></div>
<div class="" style="left:113px;top:420px;width:62px;height:46px;background:#ffe592;border:1px solid #f4cc3e;"></div>
<div class="t" style="left:117px;top:374.5px;font-size:6.93px;color:#666;">N</div>
<div class="t" style="left:179.5px;top:374.5px;font-size:6.93px;color:#666;">Дата</div>
<div class="t" style="left:290.5px;top:374.5px;font-size:6.93px;color:#666;">Субконто Дт</div>
<div class="t" style="left:482.8px;top:374.5px;font-size:6.93px;color:#666;">Количество Дт</div>
<div class="t" style="left:482.8px;top:391.5px;font-size:6.93px;color:#666;">Валюта Дт</div>
<div class="t" style="left:482.8px;top:408.2px;font-size:6.93px;color:#666;">Вал. сумма Дт</div>
<div class="t" style="left:605.8px;top:374.5px;font-size:6.93px;color:#666;">Субконто Кт</div>
<div class="t" style="left:670.5px;top:374.5px;font-size:6.93px;color:#666;">Количество Кт</div>
<div class="t" style="left:670.5px;top:391.5px;font-size:6.93px;color:#666;">Валюта Кт</div>
<div class="t" style="left:670.5px;top:408.2px;font-size:6.93px;color:#666;">Вал. сумма Кт</div>
<div class="t" style="left:840.5px;top:375.0px;font-size:6.93px;color:#666;">Сумма НУ Дт</div>
<div class="t" style="left:925px;top:375.0px;font-size:6.93px;color:#666;">Сумма НУ Кт</div>
<div class="t" style="left:220.5px;top:389.7px;font-size:6.93px;color:#666;">Подразделение Дт</div>
<div class="t" style="left:538.5px;top:389.7px;font-size:6.93px;color:#666;">Подразделение</div>
<div class="t" style="left:538.5px;top:397.7px;font-size:6.93px;color:#666;">Кт</div>
<div class="t" style="left:760.8px;top:389.7px;font-size:6.93px;color:#666;">Содержание</div>
<div class="t" style="left:220.5px;top:374.5px;font-size:6.6px;color:#3a3a3a;font-weight:bold;">Счет Дт</div>
<div class="t" style="left:538.5px;top:374.5px;font-size:6.6px;color:#3a3a3a;font-weight:bold;">Счет Кт</div>
<div class="t" style="left:760.8px;top:374.5px;font-size:6.6px;color:#3a3a3a;font-weight:bold;">Сумма</div>
<svg style="left:116.3px;top:423.9px" width="8.55" height="7.88" viewBox="0 0 8.55 7.88"><text x="0" y="3.51" font-family="Liberation Sans, sans-serif" font-weight="bold" font-size="4.5" fill="#35a046">Дт</text><text x="2.61" y="7.56" font-family="Liberation Sans, sans-serif" font-weight="bold" font-size="4.5" fill="#e5484d">Кт</text></svg>
<div class="t" style="right:854px;top:424.5px;font-size:6.88px;color:#454545;">1</div>
<div class="t" style="left:179.5px;top:424.5px;font-size:6.8px;color:#454545;">01.02.202</div>
<div class="t" style="left:182px;top:433.1px;font-size:6.8px;color:#454545;">12:00:05</div>
<div class="t" style="left:220.5px;top:424.2px;font-size:6.6px;color:#333;font-weight:bold;">41.1</div>
<div class="t" style="left:290.5px;top:424.5px;font-size:6.8px;color:#454545;">Стул &quot;Юниор&quot;</div>
<div class="t" style="left:290.5px;top:439.7px;font-size:6.8px;color:#454545;">Партия 0000-000043 от 01.02.2025 12:00:05</div>
<div class="t" style="left:290.5px;top:455.1px;font-size:6.8px;color:#454545;">Склад Товаров</div>
<div class="t" style="right:495px;top:424.5px;font-size:6.88px;color:#454545;">5,000</div>
<div class="t" style="left:538.5px;top:424.2px;font-size:6.6px;color:#333;font-weight:bold;">41.1</div>
<div class="t" style="left:605.8px;top:424.5px;font-size:6.8px;color:#454545;">Обеденная гру...</div>
<div class="t" style="left:605.8px;top:439.7px;font-size:6.8px;color:#454545;">Партия 0000-00...</div>
<div class="t" style="left:605.8px;top:455.1px;font-size:6.8px;color:#454545;">Склад Товаров</div>
<div class="t" style="right:272px;top:424.5px;font-size:6.88px;color:#454545;">0,500</div>
<div class="t" style="right:192.20000000000005px;top:424.2px;font-size:6.6px;color:#333;font-weight:bold;">250,00</div>
<div class="t" style="left:760.8px;top:438.5px;font-size:6.88px;color:#454545;">Разукомплектация</div>
<div class="t" style="right:108.5px;top:424.5px;font-size:6.88px;color:#454545;">250,00</div>
<div class="t" style="right:24.700000000000045px;top:424.5px;font-size:6.88px;color:#454545;">250,00</div>
<div class="" style="left:666px;top:420px;width:91px;height:17px;border:1px solid #e8383d;box-shadow:inset 0 0 0 1px rgba(232,56,61,.35);"></div>
<div class="" style="left:756px;top:420px;width:82px;height:17px;border:1px solid #e8383d;box-shadow:inset 0 0 0 1px rgba(232,56,61,.35);"></div>
<div class="" style="left:667px;top:466px;width:89.5px;height:15.5px;background:#fff;"></div>
<svg style="left:116.3px;top:469.9px" width="8.55" height="7.88" viewBox="0 0 8.55 7.88"><text x="0" y="3.51" font-family="Liberation Sans, sans-serif" font-weight="bold" font-size="4.5" fill="#35a046">Дт</text><text x="2.61" y="7.56" font-family="Liberation Sans, sans-serif" font-weight="bold" font-size="4.5" fill="#e5484d">Кт</text></svg>
<div class="t" style="right:854px;top:470.5px;font-size:6.88px;color:#454545;">2</div>
<div class="t" style="left:179.5px;top:470.5px;font-size:6.8px;color:#454545;">01.02.202</div>
<div class="t" style="left:182px;top:479.1px;font-size:6.8px;color:#454545;">12:00:05</div>
<div class="t" style="left:220.5px;top:470.2px;font-size:6.6px;color:#333;font-weight:bold;">41.1</div>
<div class="t" style="left:290.5px;top:470.5px;font-size:6.8px;color:#454545;">Стол обеденный &quot;Крафт&quot;</div>
<div class="t" style="left:290.5px;top:485.7px;font-size:6.8px;color:#454545;">Партия 0000-000044 от 01.02.2025 12:00:05</div>
<div class="t" style="left:290.5px;top:501.1px;font-size:6.8px;color:#454545;">Склад Товаров</div>
<div class="t" style="right:495px;top:470.5px;font-size:6.88px;color:#454545;">7,000</div>
<div class="t" style="left:538.5px;top:470.2px;font-size:6.6px;color:#333;font-weight:bold;">41.1</div>
<div class="t" style="left:605.8px;top:470.5px;font-size:6.8px;color:#454545;">Обеденная гру...</div>
<div class="t" style="left:605.8px;top:485.7px;font-size:6.8px;color:#454545;">Партия 0000-00...</div>
<div class="t" style="left:605.8px;top:501.1px;font-size:6.8px;color:#454545;">Склад Товаров</div>
<div class="t" style="right:272px;top:470.5px;font-size:6.88px;color:#454545;">0,500</div>
<div class="t" style="right:192.20000000000005px;top:470.2px;font-size:6.6px;color:#333;font-weight:bold;">250,00</div>
<div class="t" style="left:760.8px;top:484.5px;font-size:6.88px;color:#454545;">Разукомплектация</div>
<div class="t" style="right:108.5px;top:470.5px;font-size:6.88px;color:#454545;">250,00</div>
<div class="t" style="right:24.700000000000045px;top:470.5px;font-size:6.88px;color:#454545;">250,00</div>
<div class="" style="left:666px;top:466px;width:91px;height:17px;border:1px solid #e8383d;box-shadow:inset 0 0 0 1px rgba(232,56,61,.35);"></div>
<div class="" style="left:756px;top:466px;width:82px;height:17px;border:1px solid #e8383d;box-shadow:inset 0 0 0 1px rgba(232,56,61,.35);"></div>
</div>
</body></html>
